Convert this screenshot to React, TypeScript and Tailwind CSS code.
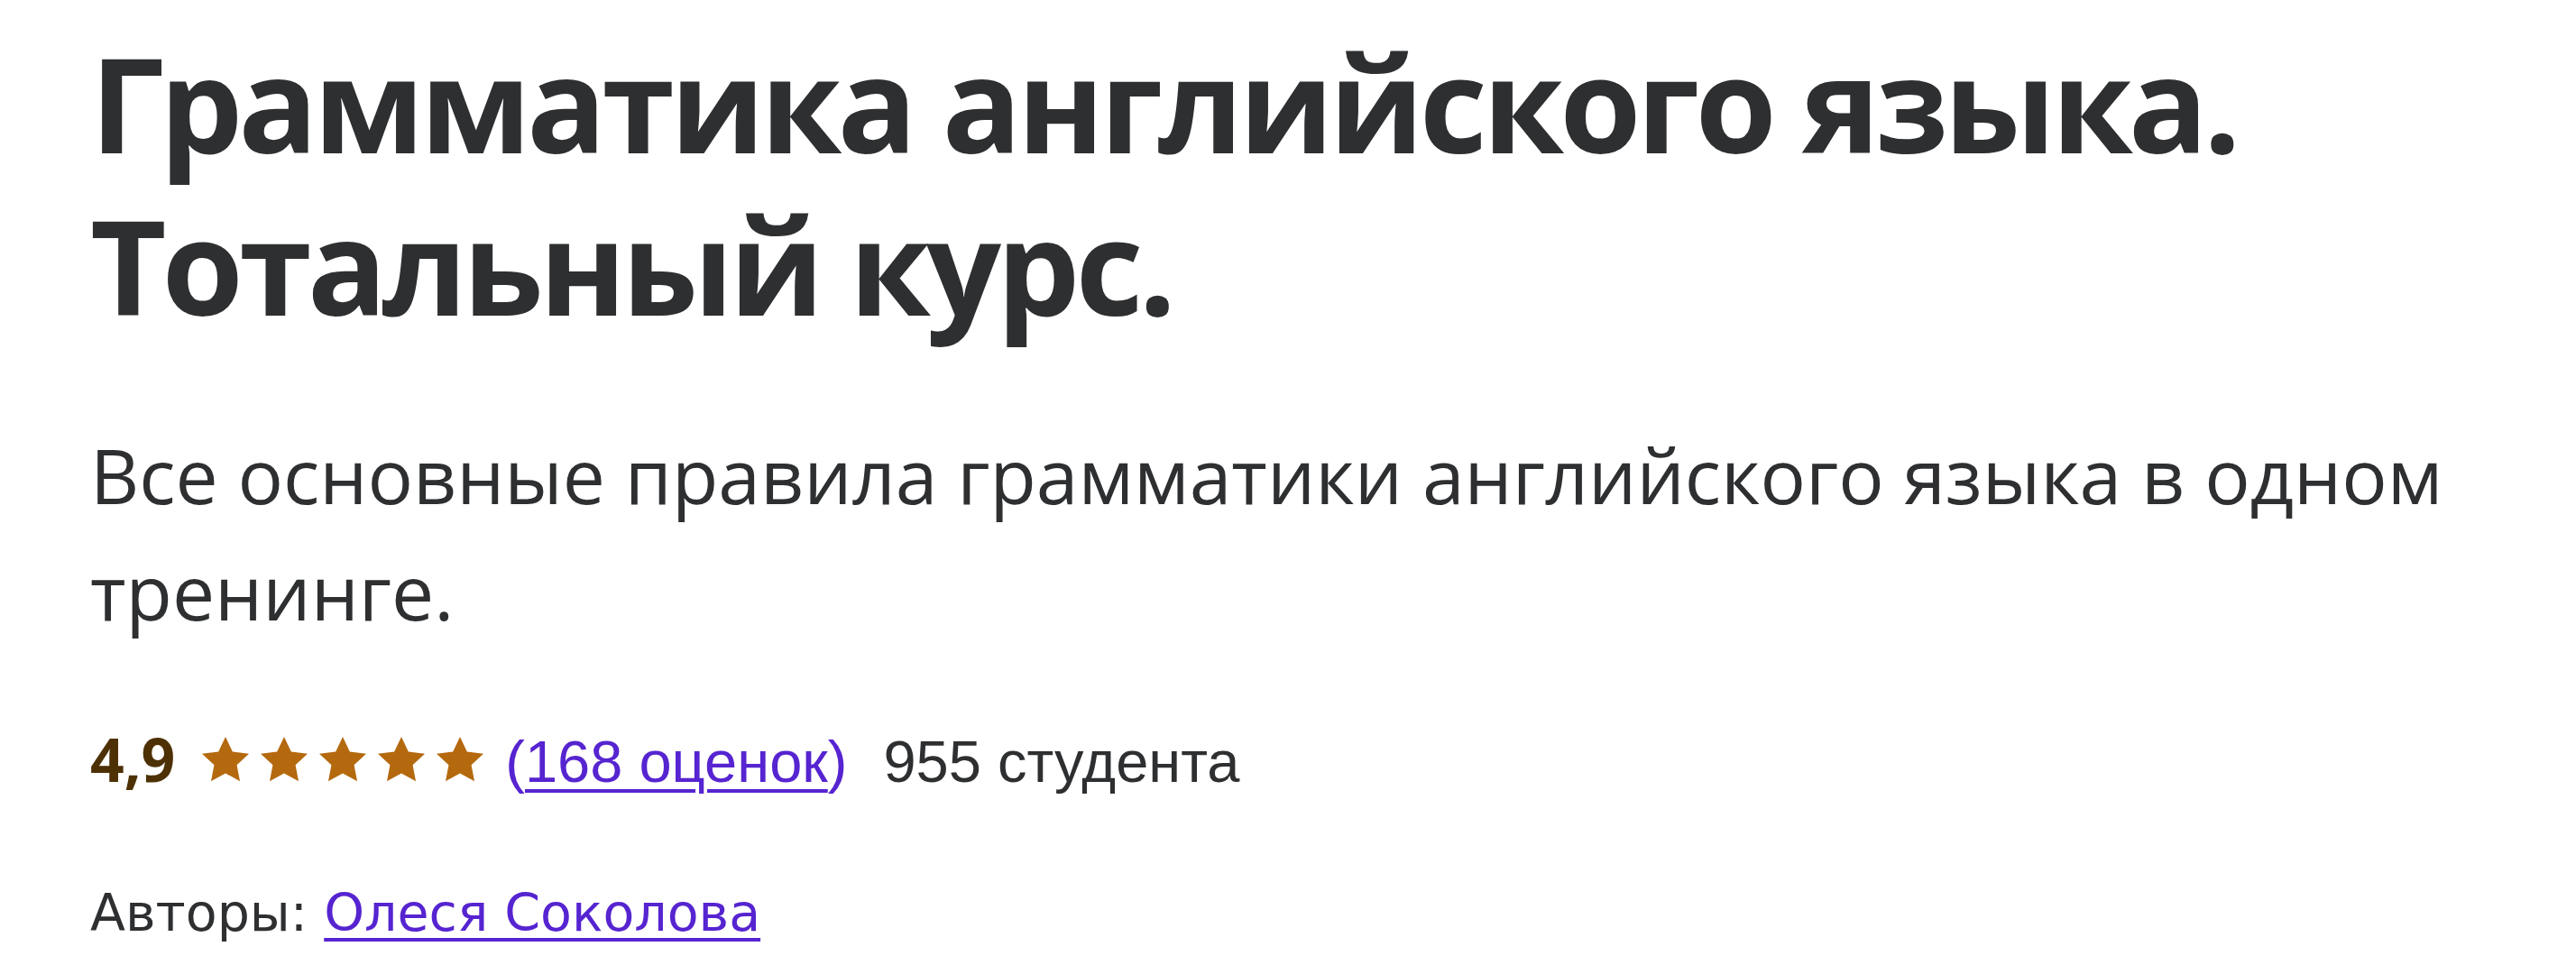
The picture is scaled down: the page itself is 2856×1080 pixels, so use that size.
import React from 'react';

const Star = () => (
  <svg viewBox="0 0 24 23" className="h-[50px] w-[52px] shrink-0 fill-[#b4690e]">
    <path d="M12 0l3.6 7.6 8.4 1-6.2 5.8 1.6 8.3L12 18.6l-7.4 4.1 1.6-8.3L0 8.6l8.4-1z" />
  </svg>
);

export default function App() {
  const rating = 4.9;
  return (
    <div className="min-h-screen w-full bg-white pl-[100px] pt-[24px] text-[#2d2f31]">
      <h1 className="font-['Open_Sans',sans-serif] text-[146px] leading-[180px] font-bold tracking-[-5px]">
        Грамматика английского языка.
        <br />
        Тотальный курс.
      </h1>

      <p className="mt-[78px] max-w-[2650px] font-['Open_Sans',sans-serif] text-[84px] leading-[129px]">
        Все основные правила грамматики английского языка в одном тренинге.
      </p>

      <div className="mt-[81px] flex items-baseline leading-[80px]">
        <span className="font-['Open_Sans',sans-serif] text-[66px] font-bold text-[#4d3105]">
          {rating.toFixed(1).replace('.', ',')}
        </span>
        <div className="ml-[30px] flex items-baseline gap-[13px]">
          {[0, 1, 2, 3, 4].map((i) => (
            <Star key={i} />
          ))}
        </div>
        <a
          href="#"
          className="ml-[24px] font-['Liberation_Sans',Arial,sans-serif] text-[65px] text-[#5624d0]"
        >
          (<span className="underline decoration-[4px] underline-offset-[8px]">168 оценок</span>)
        </a>
        <span className="ml-[40px] font-['Liberation_Sans',Arial,sans-serif] text-[65px]">
          955 студента
        </span>
      </div>

      <div className="mt-[92px] font-['DejaVu_Sans',sans-serif] text-[57px] leading-[70px]">
        Авторы:{' '}
        <a href="#" className="text-[#5624d0] underline decoration-[4px] underline-offset-[8px]">
          Олеся Соколова
        </a>
      </div>
    </div>
  );
}
